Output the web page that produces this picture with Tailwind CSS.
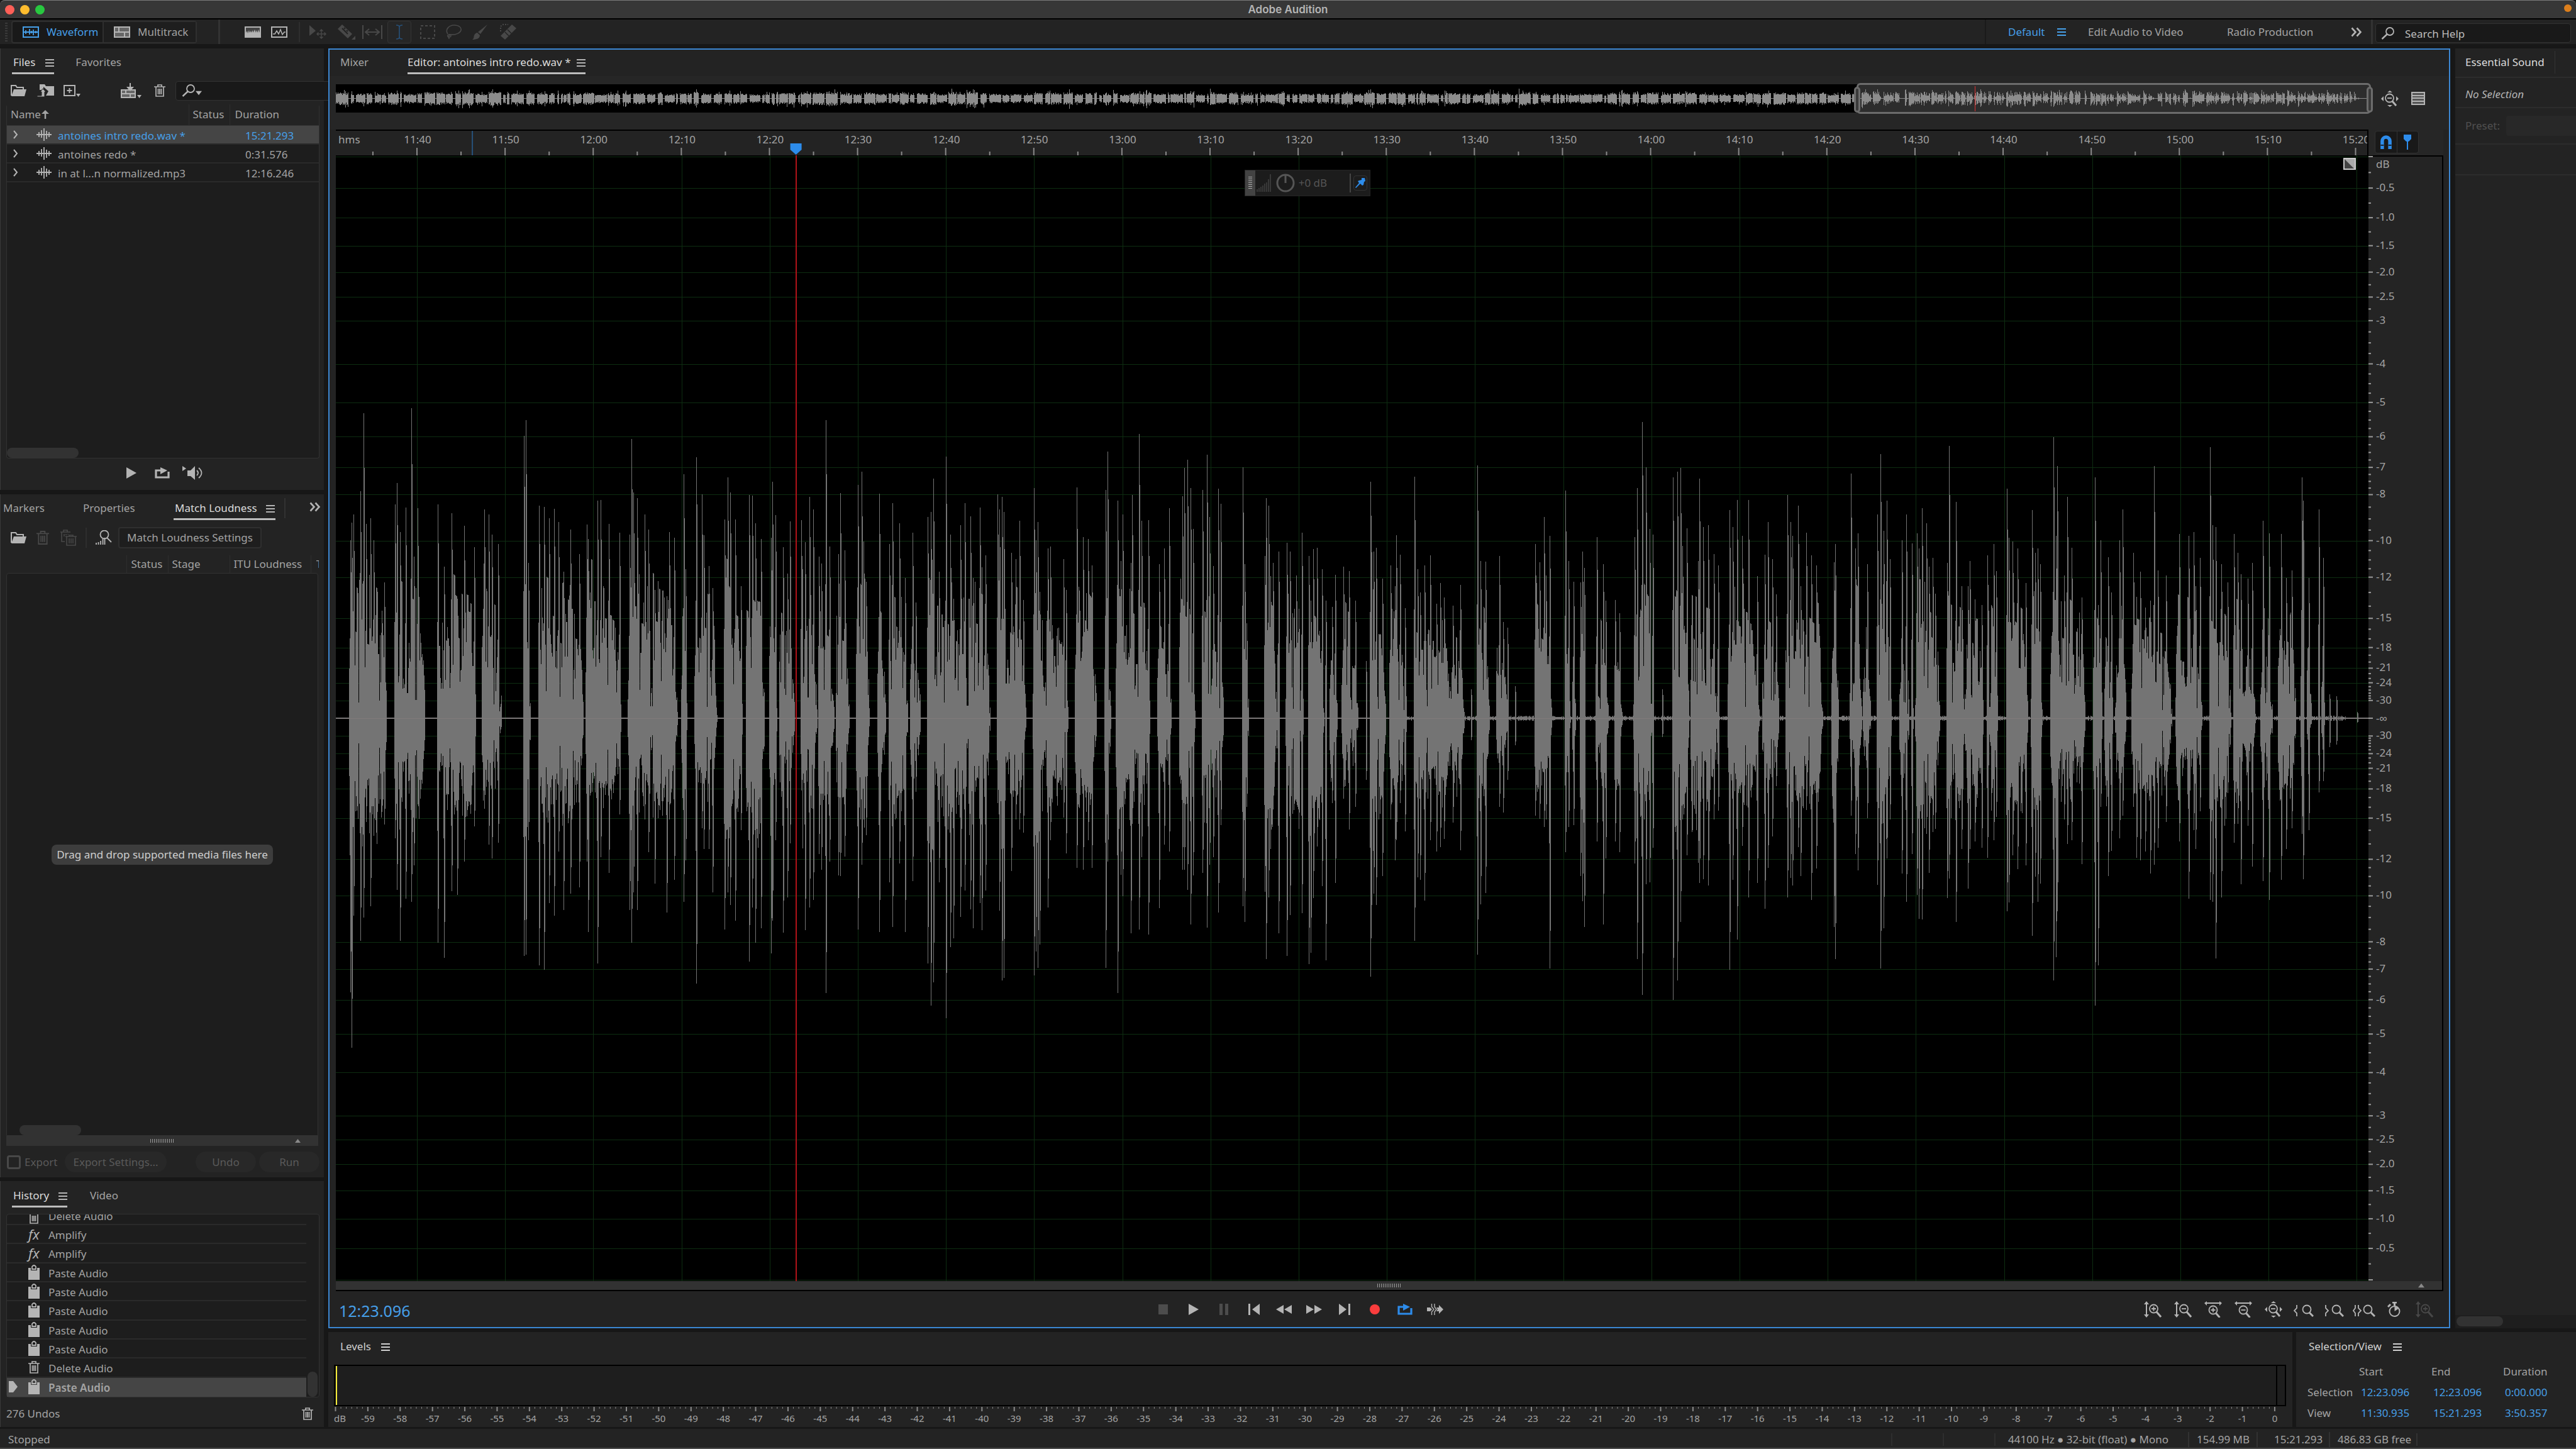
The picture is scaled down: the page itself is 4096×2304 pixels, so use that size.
<!DOCTYPE html>
<html lang="en">
<head>
    <meta charset="UTF-8">
    <meta name="viewport" content="width=device-width, initial-scale=1.0">
    <title>Adobe Audition</title>
    <script src="https://cdn.jsdelivr.net/npm/@tailwindcss/browser@4"></script>
</head>
<body class="bg-[#171717] text-[#a3a3a3] font-['Noto_Sans',sans-serif] text-[17px] leading-6 h-screen overflow-hidden flex flex-col whitespace-nowrap">

    <!-- Icon set -->
    <svg class="hidden" aria-hidden="true">
        <symbol id="i-menu" viewBox="0 0 14 12"><path d="M0 1h14M0 6h14M0 11h14" stroke="currentColor" stroke-width="2" /></symbol>
        <symbol id="i-more" viewBox="0 0 18 16"><path d="M1.500 1.500l6 6.500-6 6.500M9.500 1.500l6 6.500-6 6.500" fill="none" stroke="currentColor" stroke-width="2.600" /></symbol>
        <symbol id="i-wave" viewBox="0 0 26 18"><rect x="1" y="1" width="24" height="16" fill="none" stroke="currentColor" stroke-width="2" /><path d="M2 9h22M5 6v6M8 8v2M11 4v9M14 7v4M17 5v9M21 7v4" fill="none" stroke="currentColor" stroke-width="1.800" /></symbol>
        <symbol id="i-multi" viewBox="0 0 26 18"><rect x="1" y="1" width="24" height="16" fill="#666" stroke="currentColor" stroke-width="2" /><path d="M0 9h26M8 1v8M17 9v8" stroke="currentColor" stroke-width="2" /></symbol>
        <symbol id="i-spectral" viewBox="0 0 26 18"><rect x="1" y="1" width="24" height="16" fill="#444" stroke="currentColor" stroke-width="2" /><path d="M2 16v-6l2-3 1 4 2-5 1 4 2-3 1 3 2-4 1 4 2-5 2 5 1-4 2 4 1-5 2 5v6z" fill="currentColor" /></symbol>
        <symbol id="i-pitch" viewBox="0 0 26 18"><rect x="1" y="1" width="24" height="16" fill="none" stroke="currentColor" stroke-width="2" /><path d="M3 12h3l3-5 3 5 3-7 3 8 3-4h2" fill="none" stroke="currentColor" stroke-width="1.500" /></symbol>
        <symbol id="i-move" viewBox="0 0 28 24"><path d="M1 1v17l10-8z" fill="currentColor" /><path d="M20 8v14M13 15h14M17.500 10.500L20 8l2.500 2.500M17.500 19.500L20 22l2.500-2.500M15.500 12.500L13 15l2.500 2.500M24.500 12.500L27 15l-2.500 2.500" fill="none" stroke="currentColor" stroke-width="1.400" /></symbol>
        <symbol id="i-razor" viewBox="0 0 30 26"><path d="M8 1l16 15-7 7L1 8z" fill="currentColor" /><path d="M8 7l9 9M11 6l2 2M15 10l2 2" stroke="#232323" stroke-width="2" /><path d="M29 19v6h-6z" fill="currentColor" /></symbol>
        <symbol id="i-slip" viewBox="0 0 32 24"><path d="M1 1v22M31 1v22M6 12h20" stroke="currentColor" stroke-width="2" /><path d="M11 7l-6 5 6 5M21 7l6 5-6 5" fill="none" stroke="currentColor" stroke-width="2" /></symbol>
        <symbol id="i-ibeam" viewBox="0 0 12 24"><path d="M1 1c3 0 5 1 5 3v16c0 2-2 3-5 3M11 1c-3 0-5 1-5 3M6 20c0 2 2 3 5 3" fill="none" stroke="currentColor" stroke-width="1.600" /></symbol>
        <symbol id="i-marquee" viewBox="0 0 24 22"><rect x="1" y="1" width="22" height="20" fill="none" stroke="currentColor" stroke-width="2" stroke-dasharray="4 3" /></symbol>
        <symbol id="i-lasso" viewBox="0 0 26 24"><path d="M4 15C-1 8 6 1 14 1s12 4 11 8-8 8-16 7c-4-1-6 1-5 3s5 1 5-1-2-2-3 0 0 4 0 5" fill="none" stroke="currentColor" stroke-width="1.600" /></symbol>
        <symbol id="i-brush" viewBox="0 0 26 26"><path d="M25 1L14 16l-4-3zM9 14l4 4c0 5-5 7-12 7 3-2 2-4 3-7 1-2 3-4 5-4z" fill="currentColor" /></symbol>
        <symbol id="i-heal" viewBox="0 0 28 26"><path d="M2 12V4l4-3h8" fill="none" stroke="currentColor" stroke-width="2" stroke-dasharray="2 2" /><path d="M20 1l7 6L9 25l-7-6z" fill="currentColor" /><path d="M13 9l6 6M9 13l6 6M11 16h1M15 12h1" stroke="#232323" stroke-width="1.500" /></symbol>
        <symbol id="i-search" viewBox="0 0 22 20"><circle cx="14" cy="7" r="6" fill="none" stroke="currentColor" stroke-width="1.800" /><path d="M9.500 11.500L1.500 19" stroke="currentColor" stroke-width="2.400" /></symbol>
        <symbol id="i-folder" viewBox="0 0 25 18"><path d="M1 17V1h7l2 3h10v3" fill="none" stroke="currentColor" stroke-width="2" /><path d="M5 7h20l-3 11H1z" fill="currentColor" /></symbol>
        <symbol id="i-import" viewBox="0 0 27 20"><path d="M4 0h8l2 3h13v15H14l4-7-8-7v5H4z" fill="currentColor" /><path d="M0 18h7v-6H5l4-5 5 5h-2v8H0z" fill="currentColor" stroke="#232323" /></symbol>
        <symbol id="i-new" viewBox="0 0 27 19"><path d="M1 1h17v16H1zM9.500 5v8M5.500 9h8" fill="none" stroke="currentColor" stroke-width="2" /><path d="M20 14h7l-3.500 5z" fill="currentColor" /></symbol>
        <symbol id="i-insert" viewBox="0 0 33 24"><rect x="1" y="11" width="22" height="12" fill="#666" stroke="currentColor" stroke-width="2" /><path d="M1 17h22M8 11v6M15 17v6M15 0v9" stroke="currentColor" stroke-width="2" /><path d="M9 6h12l-6 7zM26 19h7l-3.500 5z" fill="currentColor" /></symbol>
        <symbol id="i-trash" viewBox="0 0 18 20"><path d="M0 4h18M6 4V1h6v3M3 4v15h12V4M6.500 7v9M9 7v9M11.500 7v9" fill="none" stroke="currentColor" stroke-width="1.700" /></symbol>
        <symbol id="i-trashes" viewBox="0 0 26 26"><path d="M0 4h16M5 4V1h6v3M2 4v15h5M6 7v4M9 7v2M12 7v1M8 11h18M14 11V9h6v2M10 11v14h14V11M14 14v8M17 14v8M20 14v8" fill="none" stroke="currentColor" stroke-width="1.600" /></symbol>
        <symbol id="i-scan" viewBox="0 0 26 24"><circle cx="14" cy="7" r="6.500" fill="none" stroke="currentColor" stroke-width="1.800" /><path d="M18 12l7 7M1 23v-3M4.500 23v-4M8 23v-6M11.500 23v-9M14.500 23V12" stroke="currentColor" stroke-width="1.800" /></symbol>
        <symbol id="i-clip" viewBox="0 0 24 20"><path d="M0 10h24M4 6v8M8 3v12M12 0v20M16 4v13M20 6v8" fill="none" stroke="currentColor" stroke-width="1.800" /></symbol>
        <symbol id="i-paste" viewBox="0 0 18 24"><path d="M0 5h4v4h10V5h4v19H0z" fill="currentColor" /><path d="M6 7V3q3-4 6 0v4z" fill="none" stroke="currentColor" stroke-width="1.800" /></symbol>
        <symbol id="i-play" viewBox="0 0 16 18"><path d="M0 0l16 9-16 9z" fill="currentColor" /></symbol>
        <symbol id="i-loop" viewBox="0 0 24 18"><path d="M9 5H2v11h20V7" fill="none" stroke="currentColor" stroke-width="3.200" /><path d="M9 0l11 5-11 6z" fill="currentColor" /></symbol>
        <symbol id="i-speaker" viewBox="0 0 32 22"><path d="M0 0l6 4-6 4zM8 7h5l7-7v22l-7-6H8z" fill="currentColor" /><path d="M23 7q4 4 0 8M26 3q9 8 0 16" fill="none" stroke="currentColor" stroke-width="1.800" /></symbol>
        <symbol id="i-stop" viewBox="0 0 16 18"><path d="M0 1h15v16H0z" fill="currentColor" /></symbol>
        <symbol id="i-pause" viewBox="0 0 14 18"><path d="M0 0h5v18H0zM9 0h5v18H9z" fill="currentColor" /></symbol>
        <symbol id="i-start" viewBox="0 0 18 18"><path d="M0 0h3v18H0zM18 0v18L6 9z" fill="currentColor" /></symbol>
        <symbol id="i-end" viewBox="0 0 18 18"><path d="M15 0h3v18h-3zM0 0l12 9-12 9z" fill="currentColor" /></symbol>
        <symbol id="i-rewind" viewBox="0 0 26 14"><path d="M12 0v14L0 7zM25 0v14L13 7z" fill="currentColor" /></symbol>
        <symbol id="i-forward" viewBox="0 0 26 14"><path d="M0 0l12 7-12 7zM13 0l12 7-12 7z" fill="currentColor" /></symbol>
        <symbol id="i-skip" viewBox="0 0 26 18"><path d="M7.500 0v5L11 9l-3.500 4v5M12 0v5l3 4-3 4v5" fill="none" stroke="currentColor" stroke-width="1.400" /><path d="M0 6h5l3 3-3 3H0zM15 6h4V2l7 7-7 7v-4h-4l2-3z" fill="currentColor" /></symbol>
        <symbol id="i-zin-v" viewBox="0 0 28 26"><path d="M4 3v20" stroke="currentColor" stroke-width="2" /><path d="M0 5l4-5 4 5zM0 21l4 5 4-5z" fill="currentColor" /><circle cx="15.500" cy="12" r="6.500" fill="none" stroke="currentColor" stroke-width="1.800" /><path d="M12 12h7M15.500 8.500v7" stroke="currentColor" stroke-width="1.800" /><path d="M20 17l7 8" stroke="currentColor" stroke-width="3" /></symbol>
        <symbol id="i-zout-v" viewBox="0 0 28 26"><path d="M4 3v20" stroke="currentColor" stroke-width="2" /><path d="M0 5l4-5 4 5zM0 21l4 5 4-5z" fill="currentColor" /><circle cx="15.500" cy="12" r="6.500" fill="none" stroke="currentColor" stroke-width="1.800" /><path d="M12 12h7" stroke="currentColor" stroke-width="1.800" /><path d="M20 17l7 8" stroke="currentColor" stroke-width="3" /></symbol>
        <symbol id="i-zin-h" viewBox="0 0 28 26"><path d="M3 3h22" stroke="currentColor" stroke-width="2" /><path d="M4 0L0 3l4 4zM24 0l4 3-4 4z" fill="currentColor" /><circle cx="14" cy="14" r="6.500" fill="none" stroke="currentColor" stroke-width="1.800" /><path d="M10.500 14h7M14 10.500v7" stroke="currentColor" stroke-width="1.800" /><path d="M18.500 19l6 7" stroke="currentColor" stroke-width="3" /></symbol>
        <symbol id="i-zout-h" viewBox="0 0 28 26"><path d="M3 3h22" stroke="currentColor" stroke-width="2" /><path d="M4 0L0 3l4 4zM24 0l4 3-4 4z" fill="currentColor" /><circle cx="14" cy="14" r="6.500" fill="none" stroke="currentColor" stroke-width="1.800" /><path d="M10.500 14h7" stroke="currentColor" stroke-width="1.800" /><path d="M18.500 19l6 7" stroke="currentColor" stroke-width="3" /></symbol>
        <symbol id="i-zfull" viewBox="0 0 28 26"><path d="M10 3l4-3 4 3zM10 23l4 3 4-3zM4 9l-4 4 4 4zM24 9l4 4-4 4z" fill="currentColor" /><circle cx="13.500" cy="12" r="6.500" fill="none" stroke="currentColor" stroke-width="1.800" /><path d="M10 12h7" stroke="currentColor" stroke-width="1.800" /><path d="M18 17l6 7" stroke="currentColor" stroke-width="3" /></symbol>
        <symbol id="i-zleft" viewBox="0 0 32 20"><path d="M5 1v5l-4 4 4 4v5" fill="none" stroke="currentColor" stroke-width="1.800" /><circle cx="21" cy="8" r="6.500" fill="none" stroke="currentColor" stroke-width="1.800" /><path d="M25 13l6 6" stroke="currentColor" stroke-width="3" /></symbol>
        <symbol id="i-zright" viewBox="0 0 32 20"><path d="M3 1v5l4 4-4 4v5" fill="none" stroke="currentColor" stroke-width="1.800" /><circle cx="20" cy="8" r="6.500" fill="none" stroke="currentColor" stroke-width="1.800" /><path d="M25 13l6 6" stroke="currentColor" stroke-width="3" /></symbol>
        <symbol id="i-zsel" viewBox="0 0 36 20"><path d="M4 1v5l-3 4 3 4v5M9 1v5l4 4-4 4v5" fill="none" stroke="currentColor" stroke-width="1.800" /><circle cx="24" cy="8" r="6.500" fill="none" stroke="currentColor" stroke-width="1.800" /><path d="M29 13l6 6" stroke="currentColor" stroke-width="3" /></symbol>
        <symbol id="i-timer" viewBox="0 0 22 24"><circle cx="11.500" cy="15" r="8" fill="none" stroke="currentColor" stroke-width="2" /><path d="M11.500 15V8a7 7 0 016 3z" fill="currentColor" /><path d="M8 1h7M11.500 0v6M1 8l4-4" stroke="currentColor" stroke-width="3" /></symbol>
        <symbol id="i-magnet" viewBox="0 0 16 18"><path d="M3 18V7.500a5 5 0 0110 0V18" fill="none" stroke="currentColor" stroke-width="4.500" /><path d="M1 13h4M11 13h4" stroke="#191919" stroke-width="1.500" /></symbol>
        <symbol id="i-marker" viewBox="0 0 14 24"><path d="M1 0h12v7l-4 4H5L1 7z" fill="currentColor" /><path d="M7 6v18" stroke="currentColor" stroke-width="2" /></symbol>
        <symbol id="i-pin" viewBox="0 0 16 16"><path d="M10 0h5l1 5-2 1-1 5-2 1-3-3-7 7-1-1 6-7-2-3 2-1 4-1z" fill="currentColor" /></symbol>
        <symbol id="i-up" viewBox="0 0 12 8"><path d="M6 0l6 8H0z" fill="currentColor" /></symbol>
        <symbol id="i-sort" viewBox="0 0 14 14"><path d="M7 14V4" stroke="currentColor" stroke-width="2.500" /><path d="M1 6l6-6 6 6z" fill="currentColor" /></symbol>
        <symbol id="i-chev" viewBox="0 0 8 14"><path d="M1 1l5 6-5 6" fill="none" stroke="currentColor" stroke-width="2" /></symbol>
    </svg>

    <!-- Title bar -->
    <header class="relative h-[31px] shrink-0 bg-[#373737] border-t border-t-[#7a7a7a] border-b-2 border-b-black flex items-center justify-center rounded-t-lg">
        <div class="absolute left-2 top-[7px] flex gap-[9px]">
            <button aria-label="Close" class="size-[15px] rounded-full bg-[#ff5f57]"></button>
            <button aria-label="Minimize" class="size-[15px] rounded-full bg-[#febc2e]"></button>
            <button aria-label="Zoom" class="size-[15px] rounded-full bg-[#28c840]"></button>
        </div>
        <h1 class="font-['Inter',sans-serif] text-[17px] font-semibold text-[#b4b4b4]">Adobe Audition</h1>
        <span class="absolute right-[7px] top-[6px] size-3 rounded-full bg-[#dd7f1c]"></span>
    </header>

    <!-- Tool bar -->
    <div class="h-[39px] shrink-0 bg-[#232323] flex items-center">
        <div class="ml-2 h-[30px] w-1 bg-[repeating-linear-gradient(#3a3a3a_0_2px,transparent_2px_4px)]"></div>
        <div class="ml-[6px] h-9 flex border-2 border-[#2f2f2f] bg-[#191919] rounded">
            <button class="w-[145px] pl-4 flex items-center gap-3 text-[#469fe8] border-r-2 border-[#2f2f2f]"><svg class="w-[26px] h-[18px]"><use href="#i-wave" /></svg>Waveform</button>
            <button class="w-[146px] pl-4 flex items-center gap-3 bg-[#1e1e1e]"><svg class="w-[26px] h-[18px] text-[#b4b4b4]"><use href="#i-multi" /></svg>Multitrack</button>
        </div>
        <div class="ml-[34px] w-[3px] h-full bg-[#323232]"></div>
        <div class="ml-[39px] flex gap-4 text-[#b4b4b4]">
            <button aria-label="Spectral frequency display"><svg class="w-[26px] h-[18px]"><use href="#i-spectral" /></svg></button>
            <button aria-label="Spectral pitch display"><svg class="w-[26px] h-[18px]"><use href="#i-pitch" /></svg></button>
        </div>
        <div class="ml-[18px] w-[2px] h-8 bg-[#2e2e2e]"></div>
        <div class="ml-[14px] flex items-center text-[#484848]">
            <button aria-label="Move tool" class="w-[45px]"><svg class="w-7 h-6"><use href="#i-move" /></svg></button>
            <button aria-label="Razor tool" class="w-10"><svg class="w-[30px] h-[26px]"><use href="#i-razor" /></svg></button>
            <button aria-label="Slip tool" class="w-10"><svg class="w-8 h-6"><use href="#i-slip" /></svg></button>
            <button aria-label="Time selection tool" class="w-[38px] h-9 flex items-center justify-center border border-[#343434] bg-[#262626] rounded text-[#27517a]"><svg class="w-3 h-6"><use href="#i-ibeam" /></svg></button>
            <button aria-label="Marquee tool" class="ml-[14px] w-10"><svg class="w-6 h-[22px]"><use href="#i-marquee" /></svg></button>
            <button aria-label="Lasso tool" class="w-[42px]"><svg class="w-[26px] h-6"><use href="#i-lasso" /></svg></button>
            <button aria-label="Paintbrush tool" class="w-11"><svg class="w-[26px] h-[26px]"><use href="#i-brush" /></svg></button>
            <button aria-label="Healing brush tool" class="w-7"><svg class="w-7 h-[26px]"><use href="#i-heal" /></svg></button>
        </div>
        <nav class="ml-auto h-full pl-[35px] flex items-center border-l-2 border-[#1a1a1a]">
            <a href="#" class="w-[78px] text-[#469fe8]">Default</a>
            <button aria-label="Workspace menu" class="w-[49px] text-[#469fe8]"><svg class="w-[14px] h-3"><use href="#i-menu" /></svg></button>
            <a href="#" class="w-[221px]">Edit Audio to Video</a>
            <a href="#" class="w-[197px]">Radio Production</a>
            <button aria-label="More workspaces" class="w-8 text-[#b4b4b4]"><svg class="w-[18px] h-4"><use href="#i-more" /></svg></button>
        </nav>
        <div class="w-[3px] h-full bg-[#323232]"></div>
        <label class="ml-1 mr-2 mt-1 w-[311px] h-[31px] pl-2 flex items-center gap-4 bg-[#191919] border border-[#323232] rounded">
            <svg class="w-[22px] h-5 text-[#b4b4b4]"><use href="#i-search" /></svg>
            <input type="text" aria-label="Search Help" placeholder="Search Help" class="min-w-0 flex-1 pt-[2px] outline-none placeholder:text-[#bdbdbd]">
        </label>
    </div>

    <main class="mt-[7px] flex-1 min-h-0 flex gap-[7px]">

        <!-- Left column -->
        <div class="w-[515px] shrink-0 flex flex-col">

            <!-- Files -->
            <section class="h-[702px] shrink-0 bg-[#232323] border-l border-[#3a3a3a] flex flex-col">
                <div class="h-[41px] pl-[18px] pt-[10px] flex gap-[34px]">
                    <div class="h-[31px] flex items-start gap-4 border-b-3 border-[#bdbdbd] text-[#dcdcdc]"><span class="pl-[2px]">Files</span><svg class="mt-[7px] w-[14px] h-3 text-[#b4b4b4]"><use href="#i-menu" /></svg></div>
                    <span>Favorites</span>
                </div>
                <div class="h-12 pl-4 pr-[7px] pt-1 flex items-center text-[#b4b4b4]">
                    <button aria-label="Open file"><svg class="w-[25px] h-[18px]"><use href="#i-folder" /></svg></button>
                    <button aria-label="Import file" class="ml-[17px]"><svg class="w-[27px] h-5"><use href="#i-import" /></svg></button>
                    <button aria-label="New file" class="ml-[15px]"><svg class="w-[27px] h-[19px]"><use href="#i-new" /></svg></button>
                    <button aria-label="Insert into multitrack" class="ml-16"><svg class="w-[33px] h-6"><use href="#i-insert" /></svg></button>
                    <button aria-label="Close selected files" class="ml-5"><svg class="w-[18px] h-5"><use href="#i-trash" /></svg></button>
                    <label class="ml-4 flex-1 h-[31px] pl-[9px] flex items-center bg-[#191919] border border-[#323232] rounded">
                        <svg class="shrink-0 w-[22px] h-5"><use href="#i-search" /></svg><svg class="shrink-0 mt-2 w-[10px] h-2 rotate-180"><use href="#i-up" /></svg>
                        <input type="text" aria-label="Search files" class="min-w-0 flex-1 outline-none">
                    </label>
                </div>
                <div class="ml-[9px] mr-[7px] h-[563px] flex flex-col border border-t-0 border-[#323232] rounded bg-[#1d1d1d]">
                    <table class="w-full table-fixed text-left">
                        <thead class="bg-[#232323]">
                            <tr class="h-[33px] border-b border-[#323232]">
                                <th class="w-[289px] pl-[6px] font-normal">Name <svg class="inline -ml-1 mb-1 size-[14px]"><use href="#i-sort" /></svg></th>
                                <th class="w-[65px] pl-[6px] font-normal border-l border-[#2e2e2e]">Status</th>
                                <th class="pl-2 font-normal border-l border-[#2e2e2e]">Duration</th>
                            </tr>
                        </thead>
                        <tbody id="file-rows"></tbody>
                    </table>
                    <div class="mt-auto w-[114px] h-4 bg-[#323232] rounded-full"></div>
                </div>
                <div class="flex-1 pl-[200px] pb-1 flex items-center text-[#b4b4b4]">
                    <button aria-label="Play" class="w-[45px]"><svg class="w-4 h-[18px]"><use href="#i-play" /></svg></button>
                    <button aria-label="Loop playback" class="w-11"><svg class="w-6 h-[18px]"><use href="#i-loop" /></svg></button>
                    <button aria-label="Auto-play"><svg class="w-8 h-[22px]"><use href="#i-speaker" /></svg></button>
                </div>
            </section>

            <!-- Match Loudness -->
            <section class="mt-[7px] flex-1 min-h-0 bg-[#232323] border-l border-[#3a3a3a] flex flex-col">
                <div class="h-[41px] pl-1 pt-[10px] flex">
                    <span class="w-[127px]">Markers</span>
                    <span class="w-[144px]">Properties</span>
                    <div class="w-[162px] h-[31px] pl-[2px] pr-px flex justify-between border-b-3 border-[#bdbdbd] text-[#dcdcdc]">Match Loudness<svg class="mt-[7px] w-[14px] h-3 text-[#b4b4b4]"><use href="#i-menu" /></svg></div>
                    <div class="ml-[14px] -mt-1 w-[2px] h-8 bg-[#323232]"></div>
                    <button aria-label="More panels" class="ml-auto mr-[5px] h-5 text-[#b4b4b4]"><svg class="w-[18px] h-4"><use href="#i-more" /></svg></button>
                </div>
                <div class="h-14 pl-4 flex items-center text-[#b4b4b4]">
                    <button aria-label="Open file"><svg class="w-[25px] h-[18px]"><use href="#i-folder" /></svg></button>
                    <button aria-label="Remove" class="ml-4 text-[#484848]"><svg class="w-5 h-6"><use href="#i-trash" /></svg></button>
                    <button aria-label="Remove all" class="ml-[18px] text-[#484848]"><svg class="w-[26px] h-[26px]"><use href="#i-trashes" /></svg></button>
                    <div class="ml-[14px] w-[2px] h-8 bg-[#2e2e2e]"></div>
                    <button aria-label="Scan" class="ml-[14px]"><svg class="w-[26px] h-6"><use href="#i-scan" /></svg></button>
                    <button class="ml-[10px] w-[228px] h-[34px] bg-[#1e1e1e] border-2 border-[#2f2f2f] rounded text-[#a3a3a3]">Match Loudness Settings</button>
                </div>
                <table class="ml-[9px] w-[497px] table-fixed text-left">
                    <thead>
                        <tr class="h-7">
                            <th class="w-[191px]"></th>
                            <th class="w-[66px] pl-[7px] font-normal border-l border-[#2e2e2e]">Status</th>
                            <th class="w-[98px] pl-[6px] font-normal border-l border-[#2e2e2e]">Stage</th>
                            <th class="w-[129px] pl-[6px] font-normal border-l border-[#2e2e2e]">ITU Loudness</th>
                            <th class="pl-2 border-l border-[#2e2e2e]"><div class="overflow-hidden font-normal">T</div></th>
                        </tr>
                    </thead>
                </table>
                <div class="mx-[9px] flex-1 min-h-0 relative flex items-center justify-center bg-[#1d1d1d] border border-[#323232] rounded-t">
                    <span class="px-2 h-8 leading-8 rounded-lg bg-[#3d3d3d] text-[#cfcfcf]">Drag and drop supported media files here</span>
                    <div class="absolute left-5 bottom-0 w-[98px] h-4 bg-[#323232] rounded-full"></div>
                </div>
                <div class="mx-[9px] h-4 bg-[#323232] flex items-center">
                    <div class="ml-[229px] w-[38px] h-[6px] bg-[repeating-linear-gradient(90deg,#999_0_1px,transparent_1px_3px)]"></div>
                    <svg class="ml-auto mr-[28px] w-[9px] h-[6px] text-[#8a8a8a]"><use href="#i-up" /></svg>
                </div>
                <div class="h-[50px] pl-[10px] pr-[7px] pt-px flex items-center text-[#5a5a5a]">
                    <input id="export" type="checkbox" class="appearance-none size-[22px] border-3 border-[#484848] rounded">
                    <label for="export" class="ml-[6px] w-[64px]">Export</label>
                    <button class="w-[162px] h-[33px] rounded-full bg-[#282828]">Export Settings...</button>
                    <button class="ml-auto w-24 h-[33px] rounded-full bg-[#282828]">Undo</button>
                    <button class="ml-[5px] w-24 h-[33px] rounded-full bg-[#282828]">Run</button>
                </div>
            </section>

            <!-- History -->
            <section class="mt-[6px] h-[391px] shrink-0 bg-[#232323] border-l border-[#3a3a3a] flex flex-col">
                <div class="h-[52px] pl-[18px] pt-[11px] flex gap-9">
                    <div class="h-[31px] w-[88px] pl-[2px] flex justify-between border-b-3 border-[#bdbdbd] text-[#dcdcdc]">History<svg class="mt-[7px] w-[14px] h-3 text-[#b4b4b4]"><use href="#i-menu" /></svg></div>
                    <span>Video</span>
                </div>
                <div class="ml-[9px] mr-[7px] h-[292px] flex border border-[#323232] rounded bg-[#1d1d1d]">
                    <ul class="flex-1 flex flex-col" id="history"></ul>
                    <div class="w-5 px-[2px] flex items-end"><div class="w-4 h-10 rounded-full bg-[#323232]"></div></div>
                </div>
                <div class="flex-1 pl-[9px] pr-[17px] pt-1 flex items-center justify-between">276 Undos<button aria-label="Delete history" class="text-[#b4b4b4]"><svg class="w-[18px] h-5"><use href="#i-trash" /></svg></button></div>
            </section>
        </div>

        <!-- Right side -->
        <div class="flex-1 min-w-0 flex flex-col gap-[6px]">
            <div class="flex-1 min-h-0 flex gap-2">

                <!-- Editor -->
                <section class="flex-1 min-w-0 bg-[#232323] border-2 border-[#3b86d2] flex flex-col">
                    <div class="h-[42px] shrink-0 pl-[17px] pt-2 flex">
                        <span class="w-[107px]">Mixer</span>
                        <div class="w-[283px] h-[31px] flex justify-between border-b-3 border-[#bdbdbd] text-[#dcdcdc]">Editor: antoines intro redo.wav *<svg class="mt-[7px] w-[14px] h-3 text-[#b4b4b4]"><use href="#i-menu" /></svg></div>
                    </div>
                    <div class="h-[85px] shrink-0 pl-[10px] pr-[9px] pt-[13px] flex bg-[#262626]">
                        <div class="relative flex-1 h-[45px] bg-black">
                            <div class="absolute left-[74.8%] -right-1 -top-[2px] -bottom-[2px] bg-[#2d2d2d] border-3 border-[#6c6c6c] rounded-md"></div>
                            <svg class="absolute inset-0 size-full" viewBox="0 0 3232 45" preserveAspectRatio="none" shape-rendering="crispEdges">
                                <path id="overview-path" fill="#8c8c8c" />
                                <path d="M2606 3v40" stroke="#e03030" stroke-width="1" />
                            </svg>
                            <div class="absolute left-[74.7%] top-1 bottom-0 w-[10px] rounded-full bg-[#3a3a3a] border-3 border-[#6c6c6c]"></div>
                            <div class="absolute -right-[7px] top-1 bottom-0 w-[10px] rounded-full bg-[#3a3a3a] border-3 border-[#6c6c6c]"></div>
                        </div>
                        <div class="w-[119px] h-[45px] pl-5 flex items-center gap-5 text-[#b4b4b4]">
                            <button aria-label="Zoom out full"><svg class="w-7 h-[26px]"><use href="#i-zfull" /></svg></button>
                            <button aria-label="Display options"><svg class="w-[22px] h-[21px]" viewBox="0 0 22 21"><path d="M1 1h20v19H1zM1 6h20M1 10h20M1 15h20" fill="#555" stroke="currentColor" stroke-width="2" /></svg></button>
                        </div>
                    </div>

                    <!-- Time ruler -->
                    <div class="h-[41px] shrink-0 pl-[10px] pr-[9px] flex">
                        <svg id="ruler" class="flex-1 h-full border-t-2 border-r-2 border-black text-[17px]" fill="#a3a3a3"></svg>
                        <div class="w-[119px] pl-[10px] bg-[#262626]">
                            <div class="mt-[2px] w-[70px] h-9 flex border border-[#323232] rounded bg-[#191919] text-[#2d8ceb]">
                                <button aria-label="Snap" class="flex-1 flex items-center justify-center border-r border-[#323232]"><svg class="w-5 h-[22px]"><use href="#i-magnet" /></svg></button>
                                <button aria-label="Markers" class="flex-1 flex items-center justify-center"><svg class="w-[14px] h-6"><use href="#i-marker" /></svg></button>
                            </div>
                        </div>
                    </div>

                    <!-- Waveform -->
                    <div class="flex-1 min-h-0 pl-[10px] pr-[9px] flex">
                        <div class="relative flex-1 bg-black">
                            <svg class="absolute inset-0 size-full" viewBox="0 0 3232 1790" preserveAspectRatio="none" shape-rendering="crispEdges">
                                <path id="grid-path" stroke="#0d2d11" stroke-width="1" />
                                <path id="wave-path" fill="#747474" />
                                <path d="M0 895h3232" stroke="#8a7f7f" stroke-opacity=".6" />
                                <path d="M732 0v1790" stroke="#b01218" stroke-width="2" />
                            </svg>
                            <div class="absolute left-[44.700%] top-[23px] w-[200px] h-[42px] flex items-center bg-[#1c1c1c] border border-[#262626] text-[#555]">
                                <div class="w-4 h-full flex items-center justify-center bg-[#434343]"><div class="w-[6px] h-5 bg-[repeating-linear-gradient(#aaa_0_1px,transparent_1px_3px)]"></div></div>
                                <svg class="ml-[2px] w-6 h-7" viewBox="0 0 24 28"><path d="M1 28v-4M4 28v-6M7 28v-8M10 28V18M13 28V15M16 28V13M19 28V8M22 28V0" stroke="currentColor" /></svg>
                                <svg class="ml-[7px] w-[30px] h-[30px]" viewBox="0 0 30 30"><circle cx="15" cy="15" r="13" fill="none" stroke="currentColor" stroke-width="3" /><path d="M15 2v13" stroke="currentColor" stroke-width="3" /></svg>
                                <span class="ml-[6px]">+0 dB</span>
                                <div class="ml-auto w-[2px] h-[30px] bg-[#444]"></div>
                                <button aria-label="Pin" class="mx-1 w-[22px] h-6 flex items-center justify-center border border-[#333] rounded text-[#2d8ceb]"><svg class="size-4"><use href="#i-pin" /></svg></button>
                            </div>
                            <svg class="absolute right-5 top-1 w-5 h-[19px]" viewBox="0 0 20 19"><path d="M1 1h18v17H1z" fill="#aaa" stroke="#ccc" stroke-width="2" /><path d="M2 2v15h15z" fill="#444" /></svg>
                        </div>
                        <svg id="scale" class="w-[119px] h-full bg-[#242424] border-r-2 border-black text-[17px]" fill="#a3a3a3"></svg>
                    </div>
                    <div class="relative h-4 shrink-0 ml-[10px] mr-[9px] flex items-center justify-center bg-[#323232] border-b-2 border-r-2 border-black">
                        <div class="w-[38px] h-[6px] bg-[repeating-linear-gradient(90deg,#999_0_1px,transparent_1px_3px)]"></div>
                        <svg class="absolute right-7 w-[10px] h-2 text-[#8a8a8a]"><use href="#i-up" /></svg>
                    </div>

                    <!-- Transport -->
                    <div class="h-[57px] shrink-0 pl-[15px] pr-[15px] flex items-center text-[#b4b4b4]">
                        <div class="w-[1287px] pt-1 text-[25px] text-[#469fe8]">12:23.096</div>
                        <button aria-label="Stop" class="w-12 flex justify-center text-[#4c4c4c]"><svg class="w-4 h-[18px]"><use href="#i-stop" /></svg></button>
                        <button aria-label="Play" class="w-12 flex justify-center"><svg class="w-4 h-[18px]"><use href="#i-play" /></svg></button>
                        <button aria-label="Pause" class="w-12 flex justify-center text-[#4c4c4c]"><svg class="w-[14px] h-[18px]"><use href="#i-pause" /></svg></button>
                        <button aria-label="Previous" class="w-12 flex justify-center"><svg class="w-[18px] h-[18px]"><use href="#i-start" /></svg></button>
                        <button aria-label="Rewind" class="w-12 flex justify-center"><svg class="w-[26px] h-[14px]"><use href="#i-rewind" /></svg></button>
                        <button aria-label="Fast forward" class="w-12 flex justify-center"><svg class="w-[26px] h-[14px]"><use href="#i-forward" /></svg></button>
                        <button aria-label="Next" class="w-12 flex justify-center"><svg class="w-[18px] h-[18px]"><use href="#i-end" /></svg></button>
                        <button aria-label="Record" class="w-12 flex justify-center"><span class="size-4 rounded-full bg-[#fa3d3d]"></span></button>
                        <button aria-label="Loop" class="w-12 flex justify-center text-[#2d8ceb]"><svg class="w-6 h-[18px]"><use href="#i-loop" /></svg></button>
                        <button aria-label="Skip selection" class="w-12 flex justify-center"><svg class="w-[26px] h-[18px]"><use href="#i-skip" /></svg></button>
                        <button aria-label="Zoom in amplitude" class="ml-auto w-12 flex justify-center"><svg class="w-7 h-[26px]"><use href="#i-zin-v" /></svg></button>
                        <button aria-label="Zoom out amplitude" class="w-12 flex justify-center"><svg class="w-7 h-[26px]"><use href="#i-zout-v" /></svg></button>
                        <button aria-label="Zoom in time" class="w-12 flex justify-center"><svg class="w-7 h-[26px]"><use href="#i-zin-h" /></svg></button>
                        <button aria-label="Zoom out time" class="w-12 flex justify-center"><svg class="w-7 h-[26px]"><use href="#i-zout-h" /></svg></button>
                        <button aria-label="Zoom out full" class="w-12 flex justify-center"><svg class="w-7 h-[26px]"><use href="#i-zfull" /></svg></button>
                        <button aria-label="Zoom to in point" class="w-12 pt-1 flex justify-center"><svg class="w-8 h-5"><use href="#i-zleft" /></svg></button>
                        <button aria-label="Zoom to out point" class="w-12 pt-1 flex justify-center"><svg class="w-8 h-5"><use href="#i-zright" /></svg></button>
                        <button aria-label="Zoom to selection" class="w-12 pt-1 flex justify-center"><svg class="w-9 h-5"><use href="#i-zsel" /></svg></button>
                        <button aria-label="Zoom to time" class="w-12 flex justify-center"><svg class="w-[22px] h-6"><use href="#i-timer" /></svg></button>
                        <button aria-label="Zoom selected track" class="w-12 flex justify-center text-[#484848]"><svg class="w-7 h-[26px]"><use href="#i-zin-v" /></svg></button>
                    </div>
                </section>

                <!-- Essential Sound -->
                <section class="w-[192px] shrink-0 bg-[#232323] flex flex-col">
                    <div class="h-[47px] pl-4 pb-[2px] flex items-center border-b-2 border-[#2c2c2c] text-[#dcdcdc]">Essential Sound<div class="ml-4 w-px h-9 bg-[#333]"></div></div>
                    <div class="h-12 pl-4 pt-[14px] border-b-2 border-[#2c2c2c] text-[#b4b4b4] italic">No Selection</div>
                    <div class="h-[58px] pl-4 flex items-center justify-between border-b-2 border-[#2c2c2c]">
                        <label for="preset" class="text-[#505050]">Preset:</label>
                        <select id="preset" disabled class="appearance-none w-[111px] h-8 rounded-l bg-[#282828]"></select>
                    </div>
                    <div class="h-[49px] border-b-2 border-[#2c2c2c]"></div>
                    <div class="mt-auto h-[21px] p-[2px] bg-[#1e1e1e]"><div class="w-[74px] h-4 rounded-full bg-[#323232]"></div></div>
                </section>
            </div>

            <div class="h-[151px] shrink-0 flex gap-[6px]">
                <!-- Levels -->
                <section class="flex-1 min-w-0 bg-[#232323] pl-[9px] pr-[10px]">
                    <div class="h-[52px] pl-[10px] pt-[11px] flex gap-4 text-[#cfcfcf]">Levels<svg class="mt-[7px] w-[14px] h-3"><use href="#i-menu" /></svg></div>
                    <div class="h-[66px] flex justify-between bg-[#1e1e1e] border-2 border-black">
                        <div class="ml-px w-[2px] bg-[#f5ec3a]"></div>
                        <div class="w-[14px] border-l-2 border-black"></div>
                    </div>
                    <svg id="meter" class="w-full h-8 text-[15px]" fill="#a3a3a3"></svg>
                </section>

                <!-- Selection/View -->
                <section class="w-[445px] shrink-0 bg-[#232323] pl-[18px]">
                    <div class="h-[46px] pl-[2px] pt-[11px] flex gap-[18px] text-[#cfcfcf]">Selection/View<svg class="mt-[7px] w-[14px] h-3"><use href="#i-menu" /></svg></div>
                    <table class="text-left table-fixed w-[427px]">
                        <thead>
                            <tr class="h-[33px]"><th class="w-[82px]"></th><th class="w-[115px] font-normal">Start</th><th class="w-[114px] font-normal">End</th><th class="font-normal">Duration</th></tr>
                        </thead>
                        <tbody class="text-[#469fe8]">
                            <tr class="h-[33px]"><th class="font-normal text-[#a3a3a3]">Selection</th><td class="pl-[3px]">12:23.096</td><td class="pl-[3px]">12:23.096</td><td class="pl-[3px]">0:00.000</td></tr>
                            <tr class="h-[33px]"><th class="font-normal text-[#a3a3a3]">View</th><td class="pl-[3px]">11:30.935</td><td class="pl-[3px]">15:21.293</td><td class="pl-[3px]">3:50.357</td></tr>
                        </tbody>
                    </table>
                </section>
            </div>
        </div>
    </main>

    <!-- Status bar -->
    <footer class="mt-[3px] h-8 shrink-0 pl-[13px] pt-1 bg-[#232323] border-b-2 border-[#4a4a4a] flex items-center">
        <span class="mr-auto">Stopped</span>
        <div class="mr-[80px] w-[2px] h-5 bg-[#2e2e2e]"></div>
        <div class="mr-[80px] w-[2px] h-5 bg-[#2e2e2e]"></div>
        <div class="mr-5 w-[2px] h-5 bg-[#2e2e2e]"></div>
        <span class="w-[286px]">44100 Hz ● 32-bit (float) ● Mono</span>
        <span class="w-[109px] pl-3 border-l-2 border-[#323232]">154.99 MB</span>
        <span class="w-[115px] pl-[26px] border-l-2 border-[#323232]">15:21.293</span>
        <span class="w-[139px] pl-3 border-l-2 border-[#323232]">486.83 GB free</span>
        <div class="mr-[252px] w-[2px] h-5 bg-[#323232]"></div>
    </footer>

    <script>
        // --- LISTS ---
        const files = [
            ['antoines intro redo.wav *', '15:21.293'],
            ['antoines redo *', '0:31.576'],
            ['in at l...n normalized.mp3', '12:16.246']
        ];
        document.getElementById('file-rows').innerHTML = files.map(([name, duration], i) => `
            <tr class="h-[30px] border-b-2 border-[#2a2a2a] ${i === 0 ? 'bg-[#454545] text-[#469fe8]' : ''}">
                <td colspan="2"><div class="flex items-center">
                    <svg class="ml-[10px] w-2 h-[14px] text-[#b4b4b4]"><use href="#i-chev" /></svg>
                    <svg class="ml-[29px] w-6 h-5 text-[#b4b4b4]"><use href="#i-clip" /></svg>
                    <span class="ml-[10px] pt-1">${name}</span>
                </div></td>
                <td class="pl-[25px] pt-1">${duration}</td>
            </tr>`).join('');

        const steps = ['Delete', 'Amplify', 'Amplify', 'Paste', 'Paste', 'Paste', 'Paste', 'Paste', 'Delete', 'Paste'];
        const stepIcons = {
            Delete: '<svg class="w-[18px] h-5"><use href="#i-trash" /></svg>',
            Amplify: '<i class="w-[18px] text-[22px] font-[\'Liberation_Serif\',serif]">fx</i>',
            Paste: '<svg class="w-[18px] h-6"><use href="#i-paste" /></svg>'
        };
        document.getElementById('history').innerHTML = steps.map((step, i) => {
            const last = i === steps.length - 1;
            const size = i === 0 ? 'h-[17px] items-end overflow-hidden' : 'flex-1 items-center';
            return `<li class="${size} flex border-b-2 ${last ? 'bg-[#454545] border-[#454545] font-semibold' : 'border-[#2a2a2a]'}">
                <span class="w-[34px] pl-[3px] text-[#b4b4b4]">${last ? '<svg class="w-[14px] h-[18px]" viewBox="0 0 14 18"><path d="M0 0h7l7 9-7 9H0z" fill="currentColor" /></svg>' : ''}</span>
                <span class="w-[32px] flex text-[#b4b4b4]">${stepIcons[step]}</span><span class="${i ? 'pt-1' : ''}">${step === 'Amplify' ? step : step + ' Audio'}</span></li>`;
        }).join('');

        // --- TIME RULER AND GRID ---
        const WIDTH = 3232, HEIGHT = 1790, MID = 895, FULL = 893;
        const timeX = t => (t - 690.935) * 14.02 + 2;
        let ruler = '<text x="4" y="20">hms</text>', grid = '';
        for (let t = 695; t <= 920; t += 5) {
            const x = timeX(t), pct = (x / WIDTH * 100).toFixed(3) + '%';
            const major = t % 10 === 0;
            ruler += `<line x1="${pct}" x2="${pct}" y1="${major ? 27 : 33}" y2="39" stroke="#8a8a8a" stroke-width="2" />`;
            if (major) {
                ruler += `<text x="${pct}" y="20" dx="1" text-anchor="middle">${Math.floor(t / 60)}:${String(t % 60).padStart(2, '0')}</text>`;
                grid += `M${Math.round(x)}.5 0V${HEIGHT}`;
            }
        }
        ruler += '<line x1="6.72%" x2="6.72%" y1="0" y2="39" stroke="#27517a" stroke-width="2" />';
        ruler += '<svg x="22.65%" y="20" width="18" height="18" overflow="visible"><path d="M-9 0H9V10L0 18L-9 10z" fill="#2d8ceb" /></svg>';
        document.getElementById('ruler').innerHTML = ruler;

        // --- DECIBEL SCALE ---
        const majors = [0.5, 1, 1.5, 2, 2.5, 3, 4, 5, 6, 7, 8, 10, 12, 15, 18, 21, 24, 30];
        const minors = [0.25, 0.75, 1.25, 1.75, 2.25, 2.75, 3.25, 3.5, 3.75, 4.25, 4.5, 4.75, 5.25, 5.5, 5.75, 6.25, 6.5, 6.75,
            7.25, 7.5, 7.75, 8.5, 9, 9.5, 10.5, 11, 11.5, 13, 14, 16, 17, 19, 20, 22, 23, 25, 26, 27, 28, 29];
        const level = db => Math.pow(10, -db / 20);
        const scaleTick = (y, len) => `<line x1="0" x2="${len}" y1="${y}" y2="${y}" stroke="#9a9a9a" stroke-width="2" />`;
        let scale = '<line x1="0" x2="100%" y1="0" y2="0" stroke="#000" stroke-width="4" /><text x="12" y="20">dB</text>' + scaleTick('50%', 7) + '<text x="12" y="50%" dy="6">-∞</text>';
        for (const side of [-1, 1]) {
            for (const db of [0, ...majors]) {
                const y = MID + side * FULL * level(db), pct = (y / HEIGHT * 100).toFixed(3) + '%';
                scale += scaleTick(pct, 7);
                if (db) scale += `<text x="12" y="${pct}" dy="5">-${db < 3 ? db.toFixed(1) : db}</text>`;
                grid += `M0 ${Math.round(y)}.5H${WIDTH}`;
            }
            for (const db of minors) scale += scaleTick(((MID + side * FULL * level(db)) / HEIGHT * 100).toFixed(3) + '%', 4);
        }
        document.getElementById('scale').innerHTML = scale;
        document.getElementById('grid-path').setAttribute('d', grid);

        // --- LEVEL METER SCALE ---
        let meter = '<text x="0" y="25">dB</text>';
        for (let i = 0; i <= 360; i++) {
            const pct = (0.08 + i * 0.27594).toFixed(3) + '%';
            meter += `<line x1="${pct}" x2="${pct}" y1="1" y2="${i % 6 ? 4 : 8}" stroke="#8a8a8a" stroke-width="${i % 6 ? 1 : 2}" />`;
            if (i && i % 6 === 0) meter += `<text x="${pct}" y="25" text-anchor="middle">${i / 6 - 60}</text>`;
        }
        document.getElementById('meter').innerHTML = meter;

        // --- WAVEFORM ---
        // Each take holds bursts [start, end, loudness up, loudness down] and
        // transients [position, top, bottom] in its own units, zero line at 757
        const takes = [
            { origin: 640, unit: 1.568, bursts: [
                [85,202,430,430],[225,322,450,420],[358,480,420,370],[498,560,420,300],[628,650,400,560],[674,815,420,380],[822,933,440,330],
                [952,1110,430,340],[1120,1138,350,330],[1160,1233,400,300],[1253,1312,460,420],[1322,1380,440,480],[1393,1420,440,480],[1425,1474,340,260]
            ], peaks: [
                [88,330,1415],[92,288,1547],[98,268,1230],[119,212,1290],[129,26,1235],[137,291,1005],[150,277,1208],[161,330,930],[194,431,1012],
                [228,245,1045],[234,193,1168],[244,310,1290],[260,252,1190],[278,14,1197],[298,253,960],[286,370,1110],[360,245,1295],[380,394,1332],
                [404,265,1172],[421,470,1181],[442,296,1100],[474,347,1017],[505,257,970],[520,269,1060],[529,316,1093],[548,339,1055],[630,80,1327],
                [636,43,1324],[642,384,1050],[676,247,1350],[691,250,1360],[708,277,1200],[724,255,1230],[736,287,1077],[752,405,1216],[775,305,1177],
                [802,364,1162],[826,292,1100],[830,327,1270],[858,235,1345],[868,234,1090],[893,291,1127],[928,312,988],[958,317,1216],[964,88,1295],
                [971,216,1175],[981,229,1217],[1005,268,1000],[1017,305,1078],[1036,450,1154],[1075,465,1222],[1081,311,1000],[1098,324,1145],
                [1127,172,1197],[1133,400,1098],[1166,131,1393],[1183,220,1020],[1190,318,1070],[1206,392,1070],[1218,445,1175],[1255,281,1264],
                [1265,180,1175],[1273,216,1205],[1288,280,1243],[1306,440,1025],[1330,222,1341],[1340,223,1210],[1350,290,1295],[1369,328,1260],
                [1399,324,1320],[1404,190,1243],[1414,270,1050],[1436,347,1271],[1451,410,1187],[1459,285,1057]
            ] },
            { origin: 1560, unit: 1.4255, bursts: [
                [47,92,430,400],[96,140,330,350],[144,183,400,370],[201,240,480,400],[262,287,330,300],[296,350,380,380],[354,384,360,300],
                [404,583,430,430],[602,685,420,330],[702,804,340,320],[822,884,380,300],[905,924,400,420],[937,1035,400,340],[1054,1095,340,260],
                [1118,1163,400,350],[1181,1243,400,370],[1295,1315,350,350],[1358,1402,370,400],[1418,1470,350,350],[1482,1528,330,380]
            ], peaks: [
                [47,282,930],[57,335,1265],[69,227,1210],[81,257,1192],[97,370,1083],[104,386,1120],[116,43,1416],[127,345,1100],[151,364,1134],
                [157,217,1136],[169,355,1088],[207,197,1264],[217,166,1108],[222,334,1000],[230,430,1038],[268,218,1270],[296,339,1150],[305,241,1258],
                [325,290,1105],[341,420,1270],[362,312,1147],[405,275,1345],[414,263,1446],[420,182,1390],[437,405,1150],[457,130,1476],[469,317,1305],
                [477,470,1285],[497,294,1233],[509,242,1170],[526,273,1215],[533,420,1261],[552,252,1200],[558,395,1265],[568,366,1170],[603,221,960],
                [608,257,1218],[614,227,1385],[620,262,1380],[642,360,1123],[654,375,1000],[664,283,1024],[676,474,1032],[705,205,1373],[711,330,1317],
                [716,287,1355],[722,454,1300],[744,350,1210],[752,345,1050],[789,375,995],[796,450,1081],[826,204,1116],[845,323,1120],[859,327,1050],
                [869,390,1115],[908,210,1355],[914,118,1100],[943,236,1415],[952,380,1133],[957,268,1183],[980,385,1272],[984,222,1010],[1004,75,1263],
                [1010,283,1090],[1030,282,1276],[1061,388,1212],[1074,350,1060],[1089,253,1076],[1127,225,1120],[1132,157,1120],[1141,137,1168],
                [1150,205,1252],[1156,303,1134],[1184,210,1128],[1195,126,1259],[1203,275,1108],[1213,392,1090],[1228,207,1222],[1235,243,1014],
                [1298,156,1207],[1302,388,1245],[1308,530,970],[1359,368,1173],[1364,230,1335],[1371,247,1186],[1376,416,1070],[1383,385,975],
                [1398,358,1273],[1422,337,1327],[1430,357,1228],[1448,415,950],[1456,495,1023],[1464,312,1225],[1485,368,1347],[1490,475,1320],
                [1497,351,1188],[1508,349,1064],[1521,399,1160],[1533,475,1337]
            ] },
            { origin: 2640, unit: 1.4255, bursts: [
                [3,26,260,250],[37,86,330,230],[117,164,360,400],[173,222,350,280],[242,386,340,320],[420,458,350,330],[476,509,260,180],
                [585,634,370,260],[671,687,350,280],[692,702,320,240],[712,729,340,400],[758,795,330,320],[811,834,230,270],[865,923,420,370],
                [976,1023,430,400],[1026,1109,360,350],[1131,1223,400,330],[1230,1278,330,280],[1296,1403,380,320],[1425,1447,370,450],
                [1477,1512,400,300],[1515,1537,300,200]
            ], peaks: [
                [11,490,960],[20,413,1152],[42,394,950],[59,404,1024],[76,475,970],[107,620,905],[119,190,1377],[122,271,1240],[129,358,1177],
                [136,349,1205],[153,422,1136],[176,391,1000],[189,440,1098],[193,318,1050],[203,365,960],[217,493,1028],[245,178,1290],[253,400,1138],
                [260,455,1144],[272,390,1194],[289,367,1050],[306,483,1076],[317,433,1066],[327,467,1047],[353,487,1007],[375,438,1074],[404,688,810],
                [423,151,1324],[431,380,1203],[446,381,1176],[484,368,970],[495,526,983],[507,540,905],[530,680,822],[587,339,990],[598,383,998],
                [611,275,1017],[616,415,1000],[628,320,1357],[671,211,1078],[681,380,1017],[695,430,1013],[714,432,1136],[720,358,1195],[726,397,1257],
                [760,323,1052],[779,388,1252],[785,475,1093],[813,474,1053],[825,505,1078],[868,323,1105],[875,205,1334],[889,47,1420],[900,156,1155],
                [911,303,1150],[919,317,1068],[947,688,802],[977,180,1433],[989,166,1386],[998,157,1245],[1003,344,1000],[1016,302,1085],[1047,380,1103],
                [1052,182,1152],[1062,298,1143],[1076,294,1158],[1093,363,1000],[1104,390,978],[1136,258,1360],[1146,299,1144],[1158,234,1288],
                [1173,320,1063],[1190,234,1186],[1216,416,1152],[1237,365,1214],[1246,286,1116],[1258,375,1041],[1268,460,920],[1301,222,1186],
                [1310,287,1140],[1315,319,1158],[1331,247,1066],[1338,440,1136],[1355,312,977],[1368,366,1193],[1382,390,1117],[1432,383,1258],
                [1437,340,1335],[1480,170,990],[1493,350,1083],[1500,313,1122],[1527,387,996]
            ] },
            { origin: 3700, unit: 1.4255, bursts: [
                [43,86,430,400],[107,135,380,380],[140,148,330,320],[152,222,400,340],[242,345,340,320],[355,386,350,300],[410,473,360,330],
                [480,514,400,380],[534,634,380,280],[656,682,420,450],[688,712,330,320],[718,750,430,280],[764,880,310,280],[889,965,370,260],
                [986,1048,330,360],[1055,1118,330,280],[1130,1166,380,330],[1180,1232,370,320],[1244,1254,400,300],[1261,1276,300,100],
                [1293,1298,340,150],[1303,1314,330,130]
            ], peaks: [
                [45,268,1157],[54,124,1357],[62,307,1260],[71,235,1093],[81,375,1000],[114,330,1130],[126,269,1197],[142,338,1082],[157,314,1180],
                [162,350,1238],[171,253,1239],[184,290,1035],[190,393,1128],[201,373,1030],[209,458,1022],[243,385,1188],[248,104,1142],[268,238,1246],
                [283,440,1070],[302,440,1165],[307,380,1070],[320,472,1052],[340,485,1067],[357,367,1092],[374,340,1050],[381,404,993],[412,206,1220],
                [417,325,1198],[427,333,1085],[442,350,1118],[465,433,1110],[482,258,1278],[492,360,1136],[499,350,1197],[506,388,1153],[543,83,1386],
                [550,320,1330],[554,152,1220],[573,415,1000],[582,227,1058],[595,348,1050],[624,468,1107],[661,180,1446],[670,485,1350],[678,330,970],
                [698,371,1135],[708,455,1075],[730,330,1045],[740,257,990],[769,360,970],[778,466,1092],[790,405,1097],[803,492,1076],[817,475,1130],
                [829,153,1108],[840,402,1068],[863,415,1006],[900,315,1053],[927,319,1190],[940,310,1025],[947,440,1070],[959,373,980],[988,107,1192],
                [995,294,1197],[1004,298,1333],[1019,388,1187],[1037,432,937],[1055,315,1055],[1065,360,1010],[1074,412,1155],[1094,423,1015],
                [1107,384,1112],[1137,283,1148],[1155,314,1192],[1188,315,1145],[1203,420,1070],[1218,402,1020],[1247,180,1034],[1251,236,1143],
                [1267,420,1025],[1295,257,935],[1308,373,907],[1325,700,826],[1345,704,821],[1405,742,767]
            ] }
        ];

        let seed = 20231;
        function rand() {
            seed = (seed * 1103515245 + 12345) % 2147483648;
            return seed / 2147483648;
        }

        const up = new Array(WIDTH).fill(0), down = new Array(WIDTH).fill(0);
        const AMP = 0.8 / 1.206;
        for (const take of takes) {
            const toX = v => Math.round((take.origin + v / take.unit) * 0.8 - 534);
            for (const [start, end, loudUp, loudDown] of take.bursts) {
                const a = toX(start), b = toX(end);
                let floor = 0, hold = 0, r = 0, stay = 0;
                for (let x = a; x < b; x++) {
                    // syllables keep one body level for a few columns
                    if (hold-- <= 0) {
                        floor = 0.14 + 0.42 * Math.pow(rand(), 1.4);
                        hold = 2 + Math.floor(rand() * 9);
                    }
                    if (stay-- <= 0) {
                        r = rand();
                        stay = r > 0.6 ? Math.floor(rand() * 3) : 0;
                    }
                    const pos = (x - a) / (b - a);
                    const edge = Math.min(1, (x - a + 2) / 4, (b - x + 1) / 9) * (1 - 0.2 * pos);
                    const body = r < 0.12 ? floor * 0.5 : floor;
                    up[x] = Math.max(up[x], loudUp * AMP * edge * (body + (0.9 - body) * Math.pow(r, 2.6)));
                    down[x] = Math.max(down[x], loudDown * AMP * edge * (body + 0.05 + (0.8 - body) * Math.pow(r * 0.6 + rand() * 0.4, 2.4)));
                }
            }
            for (const [v, top, bottom] of take.peaks) {
                const x = toX(v);
                up[x] = Math.max(up[x], (757 - top) * AMP);
                down[x] = Math.max(down[x], (bottom - 757) * AMP);
                up[x + 1] = Math.max(up[x + 1], up[x] * 0.82);
                down[x + 1] = Math.max(down[x + 1], down[x] * 0.85);
                if (up[x] > 150) {
                    up[x - 1] = Math.max(up[x - 1], up[x] * 0.45);
                    down[x - 1] = Math.max(down[x - 1], down[x] * 0.5);
                }
            }
        }
        // room noise between the bursts
        for (let x = 0; x < WIDTH; x++) {
            const noise = x < 1700 ? 0.6 : x > 3195 ? 0.6 : 1 + rand() * 3;
            up[x] = Math.max(up[x], noise);
            down[x] = Math.max(down[x], noise);
        }
        const bars = (a, b, mid) => a.map((t, x) => `M${x} ${(mid - t).toFixed(1)}h1v${(t + b[x]).toFixed(1)}h-1z`).join('');
        document.getElementById('wave-path').setAttribute('d', bars(up, down, MID));

        // --- OVERVIEW ---
        const oUp = new Array(WIDTH).fill(0.6), oDown = new Array(WIDTH).fill(0.6);
        const first = 2421;
        for (let x = 0; x < first;) {
            const length = 3 + Math.floor(rand() * 18), loud = 6 + rand() * 4;
            for (let i = 0; i < length && x < first; i++, x++) {
                const spike = rand() < 0.06 ? 1.5 : 1;
                oUp[x] = loud * (0.65 + rand() * 0.4) * spike;
                oDown[x] = loud * (0.65 + rand() * 0.5) * spike;
            }
            x += 1 + Math.floor(rand() * 4);
        }
        for (let x = first; x < WIDTH; x++) {
            const i = (x - first) * 4;
            oUp[x] = Math.max(0.6, ...up.slice(i, i + 4).map(v => v / 33));
            oDown[x] = Math.max(0.6, ...down.slice(i, i + 4).map(v => v / 33));
        }
        document.getElementById('overview-path').setAttribute('d', bars(oUp, oDown, 22.5));
    </script>
</body>
</html>
